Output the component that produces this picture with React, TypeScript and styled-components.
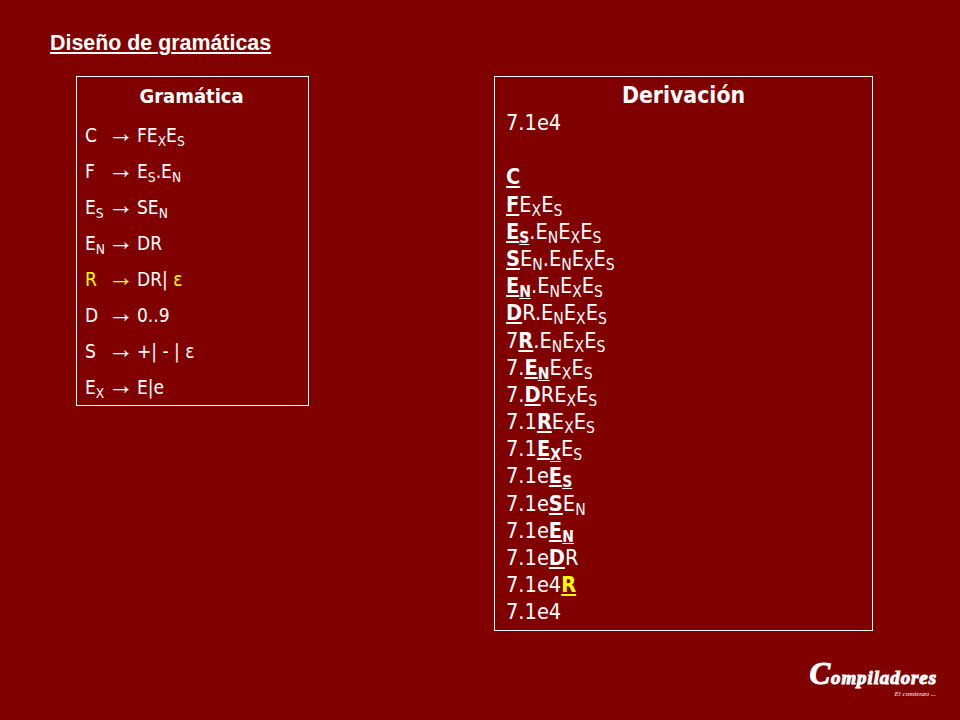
import { ReactNode } from 'react';
import styled, { createGlobalStyle } from 'styled-components';

const GlobalStyle = createGlobalStyle`
    html, body {
        margin: 0;
        padding: 0;
        background: #800000;
    }
`;

const Slide = styled.div`
    width: 960px;
    height: 720px;
    box-sizing: border-box;
    padding: 33px 23px 0 50px;
    background: #800000;
    color: #fff;
    font-family: "DejaVu Sans Condensed", "DejaVu Sans", sans-serif;
    font-stretch: condensed;
    overflow: hidden;
`;

const Title = styled.h1`
    margin: 0;
    height: 43px;
    font-family: "Liberation Sans", Arial, sans-serif;
    font-size: 21.4px;
    line-height: 20px;
    font-weight: 700;
    text-decoration: underline;
    white-space: nowrap;
`;

const Columns = styled.div`
    display: flex;
    align-items: flex-start;
    gap: 185px;
    padding-left: 26px;
`;

const GrammarBox = styled.div`
    width: 233px;
    height: 330px;
    box-sizing: border-box;
    border: 1px solid #fff;
    padding: 7px 10px 0 8px;
`;

const GrammarTitle = styled.div`
    text-align: center;
    font-size: 20px;
    line-height: 24px;
    font-weight: 700;
    margin-bottom: 12px;
`;

const Rule = styled.div<{ $hot?: boolean }>`
    display: grid;
    grid-template-columns: 25px 27px 1fr;
    height: 36px;
    font-size: 19px;
    line-height: 30px;
    white-space: pre;
    color: ${(p) => (p.$hot ? '#ffff00' : '#fff')};
`;

const Arrow = styled.span`
    font-family: "Liberation Serif", serif;
    font-size: 26px;
    line-height: 27px;
    margin-left: -2px;
    color: inherit;
`;

const Rhs = styled.span`
    color: #fff;
`;

const Yellow = styled.span`
    color: #ffff00;
`;

const DerivationBox = styled.div`
    width: 379px;
    height: 555px;
    box-sizing: border-box;
    border: 1px solid #fff;
    padding: 4px 11px 0;
`;

const DerivationTitle = styled.div`
    text-align: center;
    font-size: 22.8px;
    line-height: 28px;
    font-weight: 700;
`;

const Line = styled.div`
    height: 27.2px;
    font-size: 21.6px;
    line-height: 27px;
    white-space: pre;
`;

const Mark = styled.span<{ $hot?: boolean }>`
    font-weight: 700;
    text-decoration: underline;
    color: ${(p) => (p.$hot ? '#ffff00' : '#fff')};
`;

const Sub = styled.sub`
    font-size: 72%;
    line-height: 0;
    vertical-align: -4px;

    ${Mark} & {
        text-decoration: underline;
    }
`;

const Logo = styled.div`
    display: flex;
    flex-direction: column;
    align-items: flex-end;
    margin-top: 32px;
    font-family: "Liberation Serif", serif;
    font-style: italic;
    font-weight: 700;
`;

const LogoName = styled.div`
    font-size: 19px;
    line-height: 22px;
    letter-spacing: 0.9px;
    -webkit-text-stroke: 1px #fff;

    &::first-letter {
        font-size: 31px;
    }
`;

const LogoTag = styled.div`
    margin: 1px 1px 0 0;
    font-size: 7px;
    line-height: 8px;
    font-weight: 400;
`;

const S = ({ c }: { c: string }) => <Sub>{c}</Sub>;
const En = () => <>E<S c="N" /></>;
const Ex = () => <>E<S c="X" /></>;
const Es = () => <>E<S c="S" /></>;

const rules: { hot?: boolean; lhs: ReactNode; rhs: ReactNode }[] = [
    { lhs: 'C', rhs: <>FE<S c="X" />E<S c="S" /></> },
    { lhs: 'F', rhs: <><Es />.<En /></> },
    { lhs: <Es />, rhs: <>S<En /></> },
    { lhs: <En />, rhs: 'DR' },
    { hot: true, lhs: 'R', rhs: <>DR| <Yellow>ε</Yellow></> },
    { lhs: 'D', rhs: '0..9' },
    { lhs: 'S', rhs: '+| - | ε' },
    { lhs: <Ex />, rhs: 'E|e' },
];

const tail = <>.<En /><Ex /><Es /></>;

const steps: ReactNode[] = [
    <>7.1e4</>,
    <> </>,
    <Mark>C</Mark>,
    <><Mark>F</Mark><Ex /><Es /></>,
    <><Mark><Es /></Mark>{tail}</>,
    <><Mark>S</Mark><En />{tail}</>,
    <><Mark><En /></Mark>{tail}</>,
    <><Mark>D</Mark>R{tail}</>,
    <>7<Mark>R</Mark>{tail}</>,
    <>7.<Mark><En /></Mark><Ex /><Es /></>,
    <>7.<Mark>D</Mark>R<Ex /><Es /></>,
    <>7.1<Mark>R</Mark><Ex /><Es /></>,
    <>7.1<Mark><Ex /></Mark><Es /></>,
    <>7.1e<Mark><Es /></Mark></>,
    <>7.1e<Mark>S</Mark><En /></>,
    <>7.1e<Mark><En /></Mark></>,
    <>7.1e<Mark>D</Mark>R</>,
    <>7.1e4<Mark $hot>R</Mark></>,
    <>7.1e4</>,
];

export default function App() {
    return (
        <Slide>
            <GlobalStyle />
            <Title>Diseño de gramáticas</Title>
            <Columns>
                <GrammarBox>
                    <GrammarTitle>Gramática</GrammarTitle>
                    {rules.map((r, i) => (
                        <Rule key={i} $hot={r.hot}>
                            <span>{r.lhs}</span>
                            <Arrow>→</Arrow>
                            <Rhs>{r.rhs}</Rhs>
                        </Rule>
                    ))}
                </GrammarBox>
                <DerivationBox>
                    <DerivationTitle>Derivación</DerivationTitle>
                    {steps.map((s, i) => (
                        <Line key={i}>{s}</Line>
                    ))}
                </DerivationBox>
            </Columns>
            <Logo>
                <LogoName>Compiladores</LogoName>
                <LogoTag>El comienzo ...</LogoTag>
            </Logo>
        </Slide>
    );
}
